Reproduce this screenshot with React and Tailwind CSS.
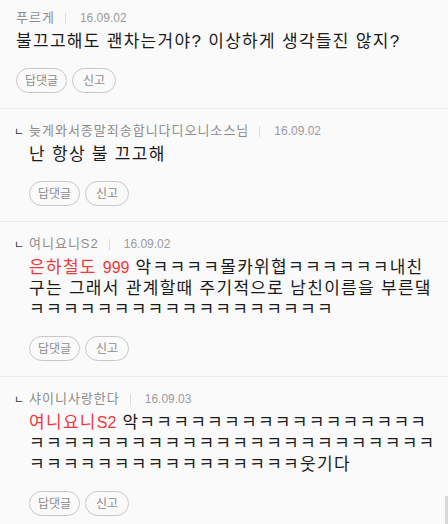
import React from 'react';

const k = (n) => 'ㅋ'.repeat(n);

const comments = [
  {
    id: 1,
    author: '푸르게',
    date: '16.09.02',
    body: '불끄고해도 괜차는거야? 이상하게 생각들진 않지?',
    first: true,
  },
  {
    id: 2,
    reply: true,
    author: '늦게와서종말죄송합니다디오니소스님',
    date: '16.09.02',
    body: '난 항상 불 끄고해',
  },
  {
    id: 3,
    reply: true,
    author: '여니요니S2',
    date: '16.09.02',
    mention: '은하철도 999',
    body: `악${k(4)}몰카위협${k(6)}내친구는 그래서 관계할때 주기적으로 남친이름을 부른댘${k(18)}`,
  },
  {
    id: 4,
    reply: true,
    author: '샤이니사랑한다',
    date: '16.09.03',
    mention: '여니요니S2',
    body: `악${k(57)}웃기다`,
  },
];

// latin runs keep their natural spacing, hangul gets the wide tracking
const Mention = ({ text }) => (
  <span className="text-[#f5363a]">
    {text.split(/([A-Za-z0-9]+)/).map((part, i) =>
      /^[A-Za-z0-9]+$/.test(part) ? (
        <span key={i} className="text-[16px] tracking-normal">{part}</span>
      ) : (
        <span key={i}>{part}</span>
      )
    )}{' '}
  </span>
);

const Comment = ({ c }) => (
  <div className={`border-b border-[#ebebeb] pb-[15px] pr-[11px] ${c.first ? 'pt-[10px] pl-4' : 'pt-[14px] pl-[29px]'}`}>
    <div className="relative flex items-center text-[13px] leading-[16px]">
      {c.reply && <span className="absolute -left-[15px] top-[1px] text-[11px] text-[#333]">ㄴ</span>}
      <span className="tracking-[1px] text-[#8c8c8c]">{c.author}</span>
      <span className="ml-[10px] mr-[14px] h-[11px] w-px bg-[#dcdcdc]" />
      <span className="text-[12px] text-[#9b9b9b]">{c.date}</span>
    </div>
    <p className="mt-[5px] text-[17px] leading-[21px] tracking-[1.3px] text-[#1a1a1a] break-all">
      {c.mention && <Mention text={c.mention} />}
      {c.body}
    </p>
    <div className="mt-4 flex gap-[5px]">
      <button className="h-[25px] w-[51px] rounded-full border border-[#c8c8c8] text-[12px] text-[#8c8c8c]">답댓글</button>
      <button className="h-[25px] w-[44px] rounded-full border border-[#c8c8c8] text-[12px] text-[#8c8c8c]">신고</button>
    </div>
  </div>
);

export default function App() {
  return (
    <div
      className="relative h-[524px] w-[448px] overflow-hidden bg-[#fafafa]"
      style={{ fontFamily: '"Liberation Sans", "Noto Sans CJK KR", sans-serif' }}
    >
      {comments.map((c) => (
        <Comment key={c.id} c={c} />
      ))}
      <div className="absolute bottom-0 right-0 h-[28px] w-[3px] bg-[#d9d9d9]" />
    </div>
  );
}
